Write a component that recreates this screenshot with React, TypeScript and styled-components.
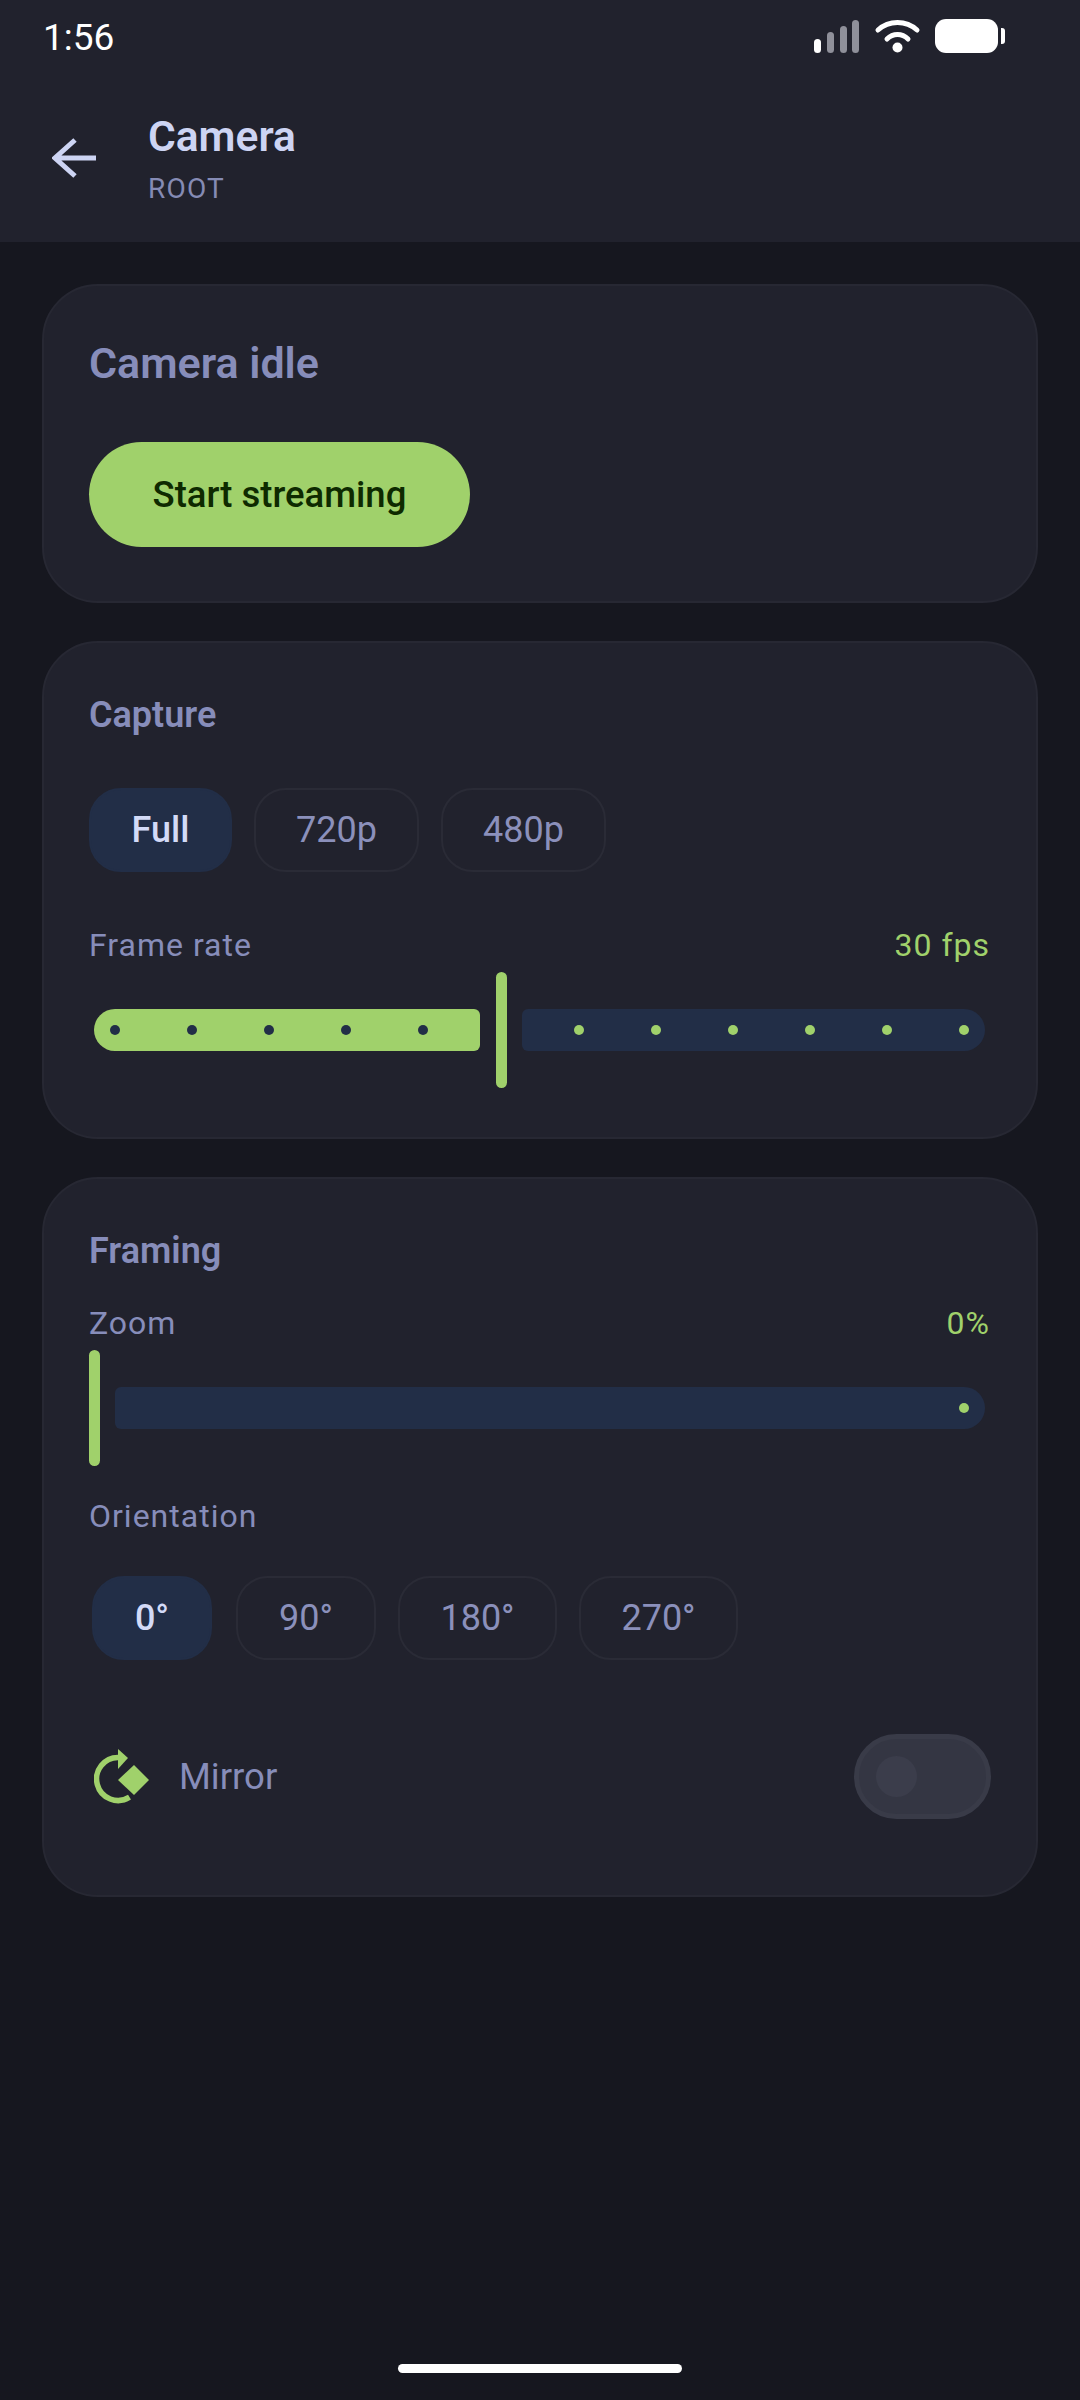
import React from 'react'
import styled, { createGlobalStyle } from 'styled-components'

const GlobalStyle = createGlobalStyle`
    html, body {
        margin: 0;
        padding: 0;
        background: #16171f;
    }
    * {
        box-sizing: border-box;
    }
`

const Page = styled.div`
    width: 1080px;
    height: 2400px;
    display: flex;
    flex-direction: column;
    background: #16171f;
    font-family: Roboto, 'Liberation Sans', sans-serif;
    overflow: hidden;
`

const TopArea = styled.header`
    height: 242px;
    background: #21222d;
    display: flex;
    flex-direction: column;
`

const StatusBar = styled.div`
    height: 74px;
    padding: 0 75px 0 43px;
    display: flex;
    align-items: center;
    justify-content: space-between;
`

const Clock = styled.span`
    font-size: 37px;
    color: #fff;
`

const StatusIcons = styled.div`
    display: flex;
    align-items: center;
    margin-top: 3px;
`

const AppBar = styled.div`
    display: flex;
    align-items: center;
    padding: 0 0 0 52px;
    margin-top: 39px;
`

const BackButton = styled.svg`
    width: 44px;
    height: 44px;
    margin-right: 52px;
`

const TitleBlock = styled.div`
    display: flex;
    flex-direction: column;
`

const ScreenTitle = styled.div`
    font-size: 42.5px;
    line-height: 48px;
    font-weight: 600;
    color: #cdd4f3;
`

const ScreenSubtitle = styled.div`
    font-size: 28px;
    line-height: 36px;
    margin-top: 10px;
    letter-spacing: 1.2px;
    color: #858bb4;
`

const Content = styled.main`
    flex: 1;
    display: flex;
    flex-direction: column;
    gap: 38px;
    padding: 42px 42px 0;
`

const Card = styled.section<{ $top: number; $bottom: number }>`
    background: #21222d;
    border: 2px solid #272833;
    border-radius: 56px;
    padding: ${({ $top }) => $top}px 45px ${({ $bottom }) => $bottom}px;
`

const IdleTitle = styled.div`
    font-size: 43px;
    line-height: 50px;
    font-weight: 600;
    color: #878dba;
`

const StartButton = styled.button`
    display: block;
    width: 381px;
    height: 105px;
    margin-top: 54px;
    border: none;
    border-radius: 53px;
    background: #a0d16b;
    color: #0e2a00;
    font-family: inherit;
    font-size: 36.5px;
    font-weight: 500;
`

const SectionTitle = styled.div`
    font-size: 36px;
    line-height: 46px;
    font-weight: 600;
    margin-top: 1px;
    color: #878dba;
`

const ChipRow = styled.div<{ $top: number; $left?: number; $firstGap?: number }>`
    display: flex;
    gap: 22px;
    margin-top: ${({ $top }) => $top}px;
    margin-left: ${({ $left }) => $left ?? 0}px;

    > :first-child {
        margin-right: ${({ $firstGap }) => $firstGap ?? 0}px;
    }
`

const Chip = styled.div<{ $active?: boolean; $width: number }>`
    width: ${({ $width }) => $width}px;
    height: 84px;
    display: flex;
    align-items: center;
    justify-content: center;
    border-radius: 32px;
    border: 2px solid ${({ $active }) => ($active ? '#222e47' : '#2a2b36')};
    background: ${({ $active }) => ($active ? '#222e47' : 'transparent')};
    color: ${({ $active }) => ($active ? '#d3daf7' : '#8b90bb')};
    font-size: 36px;
    font-weight: ${({ $active }) => ($active ? 500 : 400)};
`

const LabelRow = styled.div<{ $top: number }>`
    display: flex;
    justify-content: space-between;
    align-items: center;
    height: 40px;
    margin-top: ${({ $top }) => $top}px;
`

const Label = styled.span`
    font-size: 32px;
    letter-spacing: 1px;
    color: #878dba;
`

const Value = styled.span`
    font-size: 32px;
    letter-spacing: 1px;
    margin-right: 1px;
    color: #a0d16b;
`

const Slider = styled.div`
    display: flex;
    align-items: center;
    height: 116px;
    margin-top: 7px;
    padding-right: 6px;
`

const ActiveTrack = styled.div<{ $width: number }>`
    width: ${({ $width }) => $width}px;
    height: 42px;
    margin-left: 5px;
    padding-left: 16px;
    display: flex;
    align-items: center;
    gap: 67px;
    background: #a0d16b;
    border-radius: 21px 6px 6px 21px;
`

const Thumb = styled.div<{ $first?: boolean }>`
    width: 11px;
    height: 116px;
    margin: 0 15px 0 ${({ $first }) => ($first ? 0 : 16)}px;
    flex-shrink: 0;
    background: #a0d16b;
    border-radius: 6px;
`

const InactiveTrack = styled.div`
    flex: 1;
    height: 42px;
    padding-right: 16px;
    display: flex;
    align-items: center;
    justify-content: flex-end;
    gap: 67px;
    background: #222e47;
    border-radius: 6px 21px 21px 6px;
`

const Tick = styled.span<{ $on?: boolean }>`
    width: 10px;
    height: 10px;
    border-radius: 50%;
    flex-shrink: 0;
    background: ${({ $on }) => ($on ? '#222e47' : '#a0d16b')};
`

const MirrorRow = styled.div`
    display: flex;
    align-items: center;
    height: 85px;
    margin-top: 74px;
    padding-left: 5px;
`

const MirrorIcon = styled.svg`
    width: 56px;
    height: 56px;
    margin-right: 29px;
    flex-shrink: 0;
`

const MirrorLabel = styled.span`
    flex: 1;
    font-size: 36.5px;
    color: #878dba;
`

const Switch = styled.div`
    width: 137px;
    height: 85px;
    padding: 0 17px;
    display: flex;
    align-items: center;
    border-radius: 43px;
    background: #343643;
    border: 5px solid #393b48;
`

const SwitchKnob = styled.span`
    width: 41px;
    height: 41px;
    border-radius: 50%;
    background: #3b3d4b;
`

const HomeBar = styled.div`
    width: 284px;
    height: 9px;
    margin: 0 auto 27px;
    border-radius: 5px;
    background: #fff;
`

const Ticks = ({ count, on }: { count: number; on?: boolean }) => (
    <>
        {Array.from({ length: count }, (_, i) => (
            <Tick key={i} $on={on} />
        ))}
    </>
)

const StatusGlyphs = () => (
    <StatusIcons>
        <svg width="191" height="40" viewBox="0 0 191 40">
            <rect x="0" y="20" width="7" height="14" rx="3.5" fill="#fff" />
            <rect x="13" y="13" width="7" height="21" rx="3.5" fill="#8f909a" />
            <rect x="26" y="7" width="7" height="27" rx="3.5" fill="#8f909a" />
            <rect x="38" y="1" width="7" height="33" rx="3.5" fill="#8f909a" />
            <path d="M64 11 C75 1 92 1 103 11" fill="none" stroke="#fff" strokeWidth="5" strokeLinecap="round" />
            <path d="M73 20 C79 14 88 14 94 20" fill="none" stroke="#fff" strokeWidth="5" strokeLinecap="round" />
            <circle cx="83.5" cy="28.5" r="5" fill="#fff" />
            <rect x="121" y="0" width="63" height="34" rx="11" fill="#fff" />
            <path d="M187 9 h1 a3 3 0 0 1 3 3 v10 a3 3 0 0 1 -3 3 h-1 z" fill="#fff" />
        </svg>
    </StatusIcons>
)

const App: React.FC = () => {
    return (
        <Page>
            <GlobalStyle />
            <TopArea>
                <StatusBar>
                    <Clock>1:56</Clock>
                    <StatusGlyphs />
                </StatusBar>
                <AppBar>
                    <BackButton viewBox="0 0 44 44">
                        <path
                            d="M44 20 H3 M23 2 L3 20 L23 38"
                            fill="none"
                            stroke="#cdd4f3"
                            strokeWidth="5"
                        />
                    </BackButton>
                    <TitleBlock>
                        <ScreenTitle>Camera</ScreenTitle>
                        <ScreenSubtitle>ROOT</ScreenSubtitle>
                    </TitleBlock>
                </AppBar>
            </TopArea>
            <Content>
                <Card $top={52} $bottom={54}>
                    <IdleTitle>Camera idle</IdleTitle>
                    <StartButton>Start streaming</StartButton>
                </Card>
                <Card $top={48} $bottom={49}>
                    <SectionTitle>Capture</SectionTitle>
                    <ChipRow $top={50}>
                        <Chip $active $width={143}>Full</Chip>
                        <Chip $width={165}>720p</Chip>
                        <Chip $width={165}>480p</Chip>
                    </ChipRow>
                    <LabelRow $top={53}>
                        <Label>Frame rate</Label>
                        <Value>30 fps</Value>
                    </LabelRow>
                    <Slider>
                        <ActiveTrack $width={386}>
                            <Ticks count={5} on />
                        </ActiveTrack>
                        <Thumb />
                        <InactiveTrack>
                            <Ticks count={6} />
                        </InactiveTrack>
                    </Slider>
                </Card>
                <Card $top={48} $bottom={76}>
                    <SectionTitle>Framing</SectionTitle>
                    <LabelRow $top={29}>
                        <Label>Zoom</Label>
                        <Value>0%</Value>
                    </LabelRow>
                    <Slider>
                        <Thumb $first />
                        <InactiveTrack>
                            <Ticks count={1} />
                        </InactiveTrack>
                    </Slider>
                    <LabelRow $top={30}>
                        <Label>Orientation</Label>
                    </LabelRow>
                    <ChipRow $top={40} $left={3} $firstGap={2}>
                        <Chip $active $width={120}>0°</Chip>
                        <Chip $width={140}>90°</Chip>
                        <Chip $width={159}>180°</Chip>
                        <Chip $width={159}>270°</Chip>
                    </ChipRow>
                    <MirrorRow>
                        <MirrorIcon viewBox="0 0 56 56">
                            <path
                                d="M25 8.5 A21.5 21.5 0 1 0 35.5 48.2"
                                fill="none"
                                stroke="#a0d16b"
                                strokeWidth="5.5"
                            />
                            <path d="M24 0 L34 9 L24 20 Z" fill="#a0d16b" />
                            <path d="M24 31 L40 16 L55 31 L40 46 Z" fill="#a0d16b" />
                        </MirrorIcon>
                        <MirrorLabel>Mirror</MirrorLabel>
                        <Switch>
                            <SwitchKnob />
                        </Switch>
                    </MirrorRow>
                </Card>
            </Content>
            <HomeBar />
        </Page>
    )
}

export default App
